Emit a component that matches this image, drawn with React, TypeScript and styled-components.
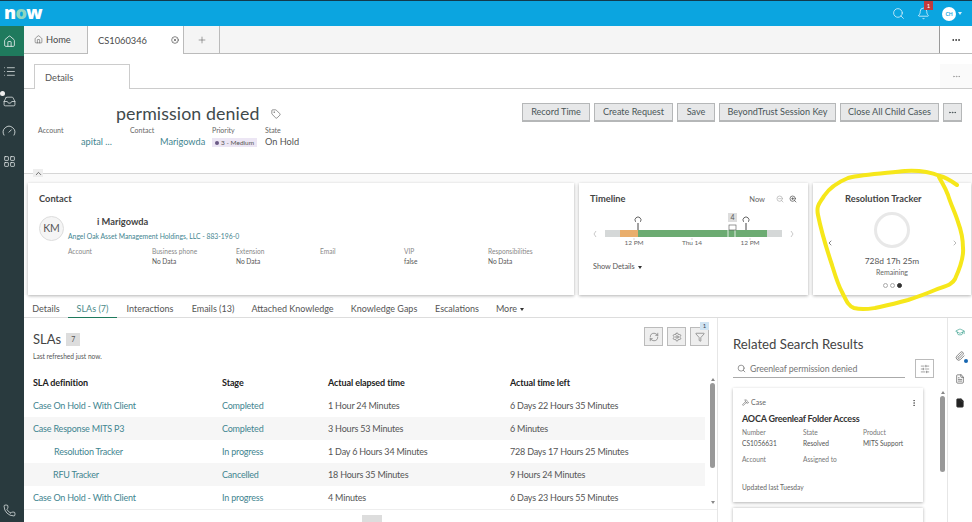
import React from "react";
import styled, { createGlobalStyle } from "styled-components";
import { Home, List, Inbox, Gauge, LayoutGrid, Phone, Search, Bell, ChevronUp, ChevronLeft, ChevronRight, Tag, RefreshCw, Settings, Filter, SlidersHorizontal, Paperclip, FileText, File, GraduationCap, ZoomIn, ZoomOut, Hammer, MoreVertical, CircleX, Plus, MoreHorizontal } from "lucide-react";

const Global = createGlobalStyle`
  html, body { margin: 0; padding: 0; width: 972px; height: 522px; overflow: hidden; background: #fff; }
  * { box-sizing: border-box; }
  body { font-family: Lato, "Noto Sans", sans-serif; color: #444; font-size: 10px; }
`;
const Page = styled.div`width: 972px; height: 522px; position: relative; overflow: hidden; display: flex; flex-direction: column;`;
const TopBar = styled.header`height: 26px; flex: none; background: #0ba5e0; border-top: 1px solid #123a4d; display: flex; align-items: center; padding: 0 10px 0 4px; color: #e8f6fc;`;
const Logo = styled.div`font: 800 18px/1 "Open Sans", sans-serif; color: #fff; letter-spacing: -0.6px; margin-top: -4px; span { color: #8fd6c0; }`;
const TopIcons = styled.div`margin-left: auto; display: flex; align-items: center; gap: 12px;`;
const BellWrap = styled.div`position: relative; display: flex;`;
const BellBadge = styled.span`position: absolute; right: -3px; top: -6px; width: 9px; height: 9px; background: #c33a3a; color: #fff; font-size: 6px; line-height: 9px; text-align: center;`;
const Avatar = styled.div`width: 14px; height: 14px; border-radius: 50%; background: #fff; color: #0ba5e0; font-size: 5px; font-weight: 700; line-height: 14px; text-align: center;`;
const AvatarWrap = styled.div`display: flex; align-items: center;`;
const Caret = styled.span`width: 0; height: 0; border: 2px solid transparent; border-top: 3px solid #d6effa; margin: 2px 0 0 2px;`;
const Body = styled.div`flex: 1; display: flex; min-height: 0;`;
const Rail = styled.nav`width: 24px; flex: none; background: #293a3e; display: flex; flex-direction: column; color: #e4eaea;`;
const RailItem = styled.div<{ $active?: boolean }>`height: 30px; display: flex; align-items: center; justify-content: center; padding-right: 6px; position: relative; background: ${p => p.$active ? "#1f7a5d" : "transparent"};`;
const RailDot = styled.span`position: absolute; left: 0; top: 5px; width: 5px; height: 5px; border-radius: 50%; background: #eee;`;
const RailSpacer = styled.div`flex: 1;`;
const RailBottom = styled.div`height: 26px; display: flex; justify-content: center; padding: 8px 6px 0 0;`;
const Main = styled.main`flex: 1; min-width: 0; display: flex; flex-direction: column;`;
const TabBar = styled.div`height: 28px; flex: none; background: #f5f5f5; border-bottom: 1px solid #bbb; display: flex; align-items: stretch;`;
const TopTab = styled.div<{ $active?: boolean; $w: number }>`width: ${p => p.$w}px; display: flex; align-items: center; gap: 3px; padding-left: 10px; font-size: 9.3px; color: #4a4a4a; background: ${p => p.$active ? "#fff" : "transparent"}; border-left: ${p => p.$active ? "1px solid #bbb" : "0"}; border-right: 1px solid ${p => p.$active ? "#bbb" : "transparent"}; margin-bottom: ${p => p.$active ? "-1px" : "0"};`;
const TabClose = styled.span`margin-left: auto; margin-right: 4px; display: flex;`;
const PlusTab = styled.div`width: 36px; display: flex; align-items: center; justify-content: center; border-right: 1px solid #bbb; color: #555;`;
const MoreTab = styled.div`margin-left: auto; width: 33px; display: flex; align-items: center; justify-content: center; background: #fff; border-left: 1px solid #999; color: #333;`;
const DetailStrip = styled.div`height: 35px; flex: none; border-bottom: 1px solid #ccc; display: flex; align-items: flex-end; padding-left: 10px;`;
const DetailTab = styled.div`width: 96px; height: 25px; border: 1px solid #ccc; border-bottom: 0; background: #fff; margin-bottom: -1px; padding: 7px 0 0 10px; font-size: 9.3px; color: #555;`;
const StripMore = styled.div`margin-left: auto; width: 32px; height: 24px; display: flex; align-items: center; justify-content: center; background: #fafafa; color: #999;`;
const Header = styled.section`height: 85px; flex: none; border-bottom: 1px solid #d6d6d6; display: flex; justify-content: space-between; padding: 0 10px 0 14px; position: relative;`;
const HeadLeft = styled.div`display: flex; flex-direction: column;`;
const TitleRow = styled.div`display: flex; align-items: center; padding-left: 78px; margin-top: 13px; height: 23px;`;
const Title = styled.h1`font: 400 17.8px/23px Lato, sans-serif; color: #3f4a4c; margin: 0; letter-spacing: 0.1px;`;
const TitleTag = styled.span`display: flex; margin-left: 11px; color: #555;`;
const Meta = styled.div`display: grid; grid-template-columns: 92px 82px 53px auto;`;
const MetaCol = styled.div`display: flex; flex-direction: column;`;
const MetaLabel = styled.span`font-size: 7px; color: #666; line-height: 10px;`;
const MetaValue = styled.span<{ $link?: boolean; $pad?: number }>`font-size: 9.2px; line-height: 14px; color: ${p => p.$link ? "#3f8590" : "#555"}; padding-left: ${p => p.$pad ?? 0}px; white-space: nowrap;`;
const Pill = styled.span`align-self: flex-start; display: inline-flex; align-items: center; gap: 2px; height: 9px; padding: 0 3px; background: #ece6f4; font-size: 6.5px; color: #555; margin-top: 3px;`;
const PillDot = styled.span`width: 4px; height: 4px; border-radius: 50%; background: #6b5a85;`;
const Buttons = styled.div`display: flex; gap: 4px; margin-top: 14px; align-items: flex-start;`;
const Btn = styled.button<{ $w: number }>`width: ${p => p.$w}px; height: 19px; padding: 0; background: #e7e8e9; border: 1px solid #b5b7b8; border-bottom-width: 2px; font: 400 9.1px/1 Lato, sans-serif; color: #4a5558; display: flex; align-items: center; justify-content: center;`;
const Chevron = styled.span`position: absolute; left: 9px; bottom: -4px; width: 10px; height: 8px; background: #eee; display: flex; align-items: center; justify-content: center; color: #444;`;
const Cards = styled.section`height: 121px; flex: none; background: #fafafa; display: grid; grid-template-columns: 546px 229px 158px; gap: 5px; padding: 9px 0 0 4px;`;
const Card = styled.div`height: 112px; background: #fff; box-shadow: 0 1px 3px rgba(0,0,0,.3); padding: 10px 11px; position: relative;`;
const CardTitle = styled.h2`font: 700 9.3px/12px Lato, sans-serif; color: #444; margin: 0;`;
const ContactRow = styled.div`display: flex; gap: 4px; margin-top: 11px;`;
const Initials = styled.div`width: 25px; height: 25px; border-radius: 50%; background: #f5f5f5; border: 1px solid #ddd; font-size: 10.5px; line-height: 23px; text-align: center; color: #555; flex: none;`;
const ContactInfo = styled.div`display: flex; flex-direction: column;`;
const ContactName = styled.div`font-weight: 700; font-size: 9.3px; line-height: 12px; color: #444; padding-left: 29px;`;
const ContactOrg = styled.a`font-size: 6.8px; line-height: 12px; margin-top: 2px; color: #3f8590;`;
const Facts = styled.div`display: grid; grid-template-columns: repeat(6, 84px); margin: 5px 0 0 29px;`;
const Fact = styled.div`display: flex; flex-direction: column; gap: 1px; font-size: 6.6px; line-height: 9px; color: #888; span { color: #555; }`;
const TimelineHead = styled.div`display: flex; align-items: center;`;
const NowTag = styled.span`margin-left: auto; font-size: 7.5px; color: #666;`;
const Zooms = styled.span`display: flex; gap: 5px; margin-left: 11px; color: #aaa; svg:last-child { color: #444; }`;
const Track = styled.svg`display: block; margin: 2px 0 0 -2px;`;
const ShowDetails = styled.div`display: flex; align-items: center; gap: 3px; font-size: 7.3px; color: #555; margin-top: 5px; padding-left: 3px;`;
const SmallCaret = styled.span`width: 0; height: 0; border: 2.5px solid transparent; border-top: 3px solid #333; margin-top: 3px;`;
const TrackerTitle = styled(CardTitle)`padding-left: 21px;`;
const Ring = styled.div`width: 36px; height: 36px; border: 3px solid #e8e8e8; border-radius: 50%; margin: 7px auto 0;`;
const TrackerArrow = styled.span<{ $right?: boolean }>`position: absolute; top: 56px; ${p => p.$right ? "right: 12px;" : "left: 13px;"} display: flex; color: ${p => p.$right ? "#999" : "#444"};`;
const TrackerValue = styled.div`text-align: center; font-size: 8.4px; line-height: 12px; color: #555; margin-top: 7px;`;
const TrackerSub = styled.div`text-align: center; font-size: 7px; line-height: 10px; color: #666;`;
const Dots = styled.div`display: flex; justify-content: center; gap: 2px; margin-top: 6px;`;
const Dot = styled.span<{ $on?: boolean }>`width: 5px; height: 5px; border-radius: 50%; border: 1px solid ${p => p.$on ? "#333" : "#aaa"}; background: ${p => p.$on ? "#333" : "#fff"};`;
const TabsRow = styled.div`height: 23px; flex: none; border-bottom: 1px solid #ddd; display: flex; align-items: stretch;`;
const SubTab = styled.div<{ $active?: boolean; $w: number }>`width: ${p => p.$w}px; display: flex; align-items: center; justify-content: center; gap: 3px; padding-top: 4px; font-size: 9px; color: ${p => p.$active ? "#4a8a88" : "#555"}; border-bottom: ${p => p.$active ? "1px solid #1f7a5d" : "0"}; margin-bottom: -1px;`;
const Lower = styled.section`flex: 1; min-height: 0; display: flex;`;
const SlaPanel = styled.div`width: 694px; flex: none; border-right: 1px solid #e6e6e6; display: flex; flex-direction: column; position: relative; overflow: hidden;`;
const SlaHead = styled.div`height: 52px; flex: none; display: flex; padding: 12px 9px 0 9px;`;
const SlaTitleBox = styled.div`display: flex; flex-direction: column;`;
const SlaTitleLine = styled.div`display: flex; align-items: center; gap: 5px;`;
const SlaTitle = styled.h2`font: 400 13px/18px Lato, sans-serif; color: #444; margin: 0;`;
const CountBadge = styled.span`width: 14px; height: 13px; background: #ddd; font-size: 7px; line-height: 13px; text-align: center; color: #555;`;
const Refreshed = styled.div`font-size: 6.6px; line-height: 9px; color: #555; margin-top: 4px;`;
const Tools = styled.div`margin-left: auto; margin-top: -3px; display: flex; gap: 4px; margin-right: -1px; height: 19px;`;
const ToolBtn = styled.div`width: 19px; height: 19px; background: #eee; border: 1px solid #bbb; display: flex; align-items: center; justify-content: center; position: relative; color: #555;`;
const ToolBadge = styled.span`position: absolute; right: -1px; top: -6px; width: 9px; height: 8px; background: #cfe3f2; font-size: 6px; line-height: 8px; text-align: center; color: #345;`;
const Row = styled.div<{ $stripe?: boolean; $head?: boolean }>`height: ${p => p.$head ? 24 : 23}px; flex: none; display: grid; grid-template-columns: 189px 106px 182px auto; align-items: center; padding-left: 9px; width: 681px; background: ${p => p.$stripe ? "#f6f6f6" : "#fff"}; font-size: 9px; letter-spacing: ${p => p.$head ? "-0.1px" : "-0.2px"}; color: ${p => p.$head ? "#222" : "#555"}; font-weight: ${p => p.$head ? 700 : 400};`;
const LinkCell = styled.span<{ $pad?: number }>`color: #3f8590; padding-left: ${p => p.$pad ?? 0}px;`;
const ScrollTrack = styled.div`position: absolute; right: 1px; top: 58px; width: 7px; height: 130px; display: flex; flex-direction: column; align-items: center;`;
const Arrow = styled.span<{ $down?: boolean }>`width: 0; height: 0; border: 2.5px solid transparent; ${p => p.$down ? "border-top: 3px solid #888;" : "border-bottom: 3px solid #888;"}`;
const Thumb = styled.div`width: 5px; height: 85px; background: #999; border-radius: 3px; margin: 2px 0 auto;`;
const CutRow = styled.div`height: 10px; flex: none; border-top: 1px solid #eee; position: relative;`;
const HScroll = styled.span`position: absolute; left: 338px; top: 5px; width: 20px; height: 8px; background: #ddd;`;
const RelPanel = styled.div`width: 229px; flex: none; padding: 17px 0 0 15px; position: relative; overflow: hidden;`;
const RelTitle = styled.h2`font: 400 13.2px/18px Lato, sans-serif; color: #444; margin: 0;`;
const SearchRow = styled.div`display: flex; align-items: flex-start; gap: 10px; margin-top: 6px;`;
const SearchBox = styled.div`width: 172px; height: 19px; border-bottom: 1px solid #aaa; display: flex; align-items: center; gap: 4px; padding-left: 4px; font-size: 8.8px; letter-spacing: -0.1px; color: #777;`;
const FilterBtn = styled.div`width: 19px; height: 19px; border: 1px solid #bbb; display: flex; align-items: center; justify-content: center; color: #555;`;
const ResultCard = styled.article`width: 190px; height: 114px; background: #fff; box-shadow: 0 1px 3px rgba(0,0,0,.3); margin-top: 10px; padding: 10px 9px; position: relative;`;
const ResultKind = styled.div`display: flex; align-items: center; gap: 2px; font-size: 7px; color: #666;`;
const ResultMenu = styled.span`position: absolute; right: 5px; top: 11px; display: flex; color: #444;`;
const ResultName = styled.div`font-weight: 700; font-size: 9px; letter-spacing: -0.2px; line-height: 12px; color: #333; margin-top: 7px;`;
const ResultGrid = styled.div`display: grid; grid-template-columns: 61px 60px auto; row-gap: 7px; margin-top: 3px;`;
const ResultFact = styled.div`display: flex; flex-direction: column; gap: 2px; font-size: 6.6px; line-height: 9px; color: #777; span { color: #555; min-height: 9px; }`;
const Updated = styled.div`font-size: 6.6px; color: #666; margin-top: 8px;`;
const NextCard = styled.div`width: 190px; height: 30px; background: #fff; box-shadow: 0 0 3px rgba(0,0,0,.3); margin-top: 6px;`;
const RelScroll = styled.div`position: absolute; right: 1px; top: 71px; width: 7px; height: 90px; display: flex; flex-direction: column; align-items: center;`;
const RelThumb = styled(Thumb)`height: 76px;`;
const SideRail = styled.aside`flex: 1; border-left: 1px solid #e6e6e6; display: flex; flex-direction: column; align-items: center; gap: 13.5px; padding-top: 9px; color: #444;`;
const ClipWrap = styled.span`position: relative; display: flex;`;
const ClipDot = styled.span`position: absolute; right: -3px; bottom: -2px; width: 4px; height: 4px; border-radius: 50%; background: #1666b0;`;
const Scribble = styled.svg`position: absolute; left: 0; top: 0; pointer-events: none;`;

const rows: { def: string; pad?: number; stage: string; elapsed: string; left: string }[] = [
  { def: "Case On Hold - With Client", stage: "Completed", elapsed: "1 Hour 24 Minutes", left: "6 Days 22 Hours 35 Minutes" },
  { def: "Case Response MITS P3", stage: "Completed", elapsed: "3 Hours 53 Minutes", left: "6 Minutes" },
  { def: "Resolution Tracker", pad: 21, stage: "In progress", elapsed: "1 Day 6 Hours 34 Minutes", left: "728 Days 17 Hours 25 Minutes" },
  { def: "RFU Tracker", pad: 20, stage: "Cancelled", elapsed: "18 Hours 35 Minutes", left: "9 Hours 24 Minutes" },
  { def: "Case On Hold - With Client", stage: "In progress", elapsed: "4 Minutes", left: "6 Days 23 Hours 55 Minutes" },
];
const subTabs: [string, number, boolean?][] = [["Details", 44], ["SLAs (7)", 49, true], ["Interactions", 66], ["Emails (13)", 60], ["Attached Knowledge", 99], ["Knowledge Gaps", 84], ["Escalations", 62]];
const facts = [["Account", ""], ["Business phone", "No Data"], ["Extension", "No Data"], ["Email", ""], ["VIP", "false"], ["Responsibilities", "No Data"]];

export default function App() {
  return (
    <Page>
      <Global />
      <TopBar>
        <Logo>n<span>o</span>w</Logo>
        <TopIcons>
          <Search size={13} strokeWidth={1.4} />
          <BellWrap><Bell size={13} strokeWidth={1.4} /><BellBadge>1</BellBadge></BellWrap>
          <AvatarWrap><Avatar>CH</Avatar><Caret /></AvatarWrap>
        </TopIcons>
      </TopBar>
      <Body>
        <Rail>
          <RailItem $active><Home size={13} strokeWidth={1.6} /></RailItem>
          <RailItem><List size={13} strokeWidth={1.4} /></RailItem>
          <RailItem><RailDot /><Inbox size={13} strokeWidth={1.4} /></RailItem>
          <RailItem><Gauge size={14} strokeWidth={1.4} /></RailItem>
          <RailItem><LayoutGrid size={13} strokeWidth={1.4} /></RailItem>
          <RailSpacer />
          <RailBottom><Phone size={13} strokeWidth={1.4} /></RailBottom>
        </Rail>
        <Main>
          <TabBar>
            <TopTab $w={63}><Home size={9} strokeWidth={1.4} />Home</TopTab>
            <TopTab $active $w={97}>CS1060346<TabClose><CircleX size={8} /></TabClose></TopTab>
            <PlusTab><Plus size={10} strokeWidth={1.3} /></PlusTab>
            <MoreTab><MoreHorizontal size={10} strokeWidth={2.4} /></MoreTab>
          </TabBar>
          <DetailStrip>
            <DetailTab>Details</DetailTab>
            <StripMore><MoreHorizontal size={9} /></StripMore>
          </DetailStrip>
          <Header>
            <HeadLeft>
              <TitleRow>
                <Title>permission denied</Title>
                <TitleTag><Tag size={10} strokeWidth={1.5} /></TitleTag>
              </TitleRow>
              <Meta>
                <MetaCol><MetaLabel>Account</MetaLabel><MetaValue $link $pad={43}>apital ...</MetaValue></MetaCol>
                <MetaCol><MetaLabel>Contact</MetaLabel><MetaValue $link $pad={30}>Marigowda</MetaValue></MetaCol>
                <MetaCol><MetaLabel>Priority</MetaLabel><Pill><PillDot />3 - Medium</Pill></MetaCol>
                <MetaCol><MetaLabel>State</MetaLabel><MetaValue>On Hold</MetaValue></MetaCol>
              </Meta>
            </HeadLeft>
            <Buttons>
              <Btn $w={68}>Record Time</Btn>
              <Btn $w={79}>Create Request</Btn>
              <Btn $w={38}>Save</Btn>
              <Btn $w={117}>BeyondTrust Session Key</Btn>
              <Btn $w={99}>Close All Child Cases</Btn>
              <Btn $w={19}><MoreHorizontal size={9} strokeWidth={2.4} /></Btn>
            </Buttons>
            <Chevron><ChevronUp size={9} /></Chevron>
          </Header>
          <Cards>
            <Card>
              <CardTitle>Contact</CardTitle>
              <ContactRow>
                <Initials>KM</Initials>
                <ContactInfo>
                  <ContactName>i Marigowda</ContactName>
                  <ContactOrg>Angel Oak Asset Management Holdings, LLC - 883-196-0</ContactOrg>
                </ContactInfo>
              </ContactRow>
              <Facts>
                {facts.map(([l, v]) => <Fact key={l}>{l}<span>{v}</span></Fact>)}
              </Facts>
            </Card>
            <Card>
              <TimelineHead>
                <CardTitle>Timeline</CardTitle>
                <NowTag>Now</NowTag>
                <Zooms><ZoomOut size={8} /><ZoomIn size={8} /></Zooms>
              </TimelineHead>
              <Track width="216" height="50" viewBox="0 0 216 50">
                <path d="M8 24l-2 3 2 3M203 24l2 3-2 3" fill="none" stroke="#bbb" strokeWidth="0.8" />
                <rect x="17" y="23" width="15" height="7" fill="#d5d8d8" />
                <rect x="32" y="23" width="18" height="7" fill="#e9ae6c" />
                <rect x="50" y="23" width="129" height="7" fill="#6cab72" />
                <rect x="179" y="23" width="15" height="7" fill="#d5d8d8" />
                <path d="M140 23v7M147 23v7" stroke="#fff" strokeWidth="0.8" />
                <rect x="141" y="18" width="7" height="5" fill="none" stroke="#555" strokeWidth="0.6" />
                <rect x="140" y="6" width="9" height="9" fill="#ddd" />
                <text x="144.5" y="13" fontSize="7" textAnchor="middle" fill="#555" fontFamily="Lato">4</text>
                <path d="M47.6 14.8a3 3 0 1 1 4.8 0" fill="none" stroke="#555" strokeWidth="0.9" />
                <path d="M50 16v7" stroke="#444" strokeWidth="1" />
                <path d="M155.6 14.8a3 3 0 1 1 4.8 0" fill="none" stroke="#555" strokeWidth="0.9" />
                <path d="M158 16v7" stroke="#444" strokeWidth="1" />
                <path d="M46 31v2M104 31v2M162 31v2" stroke="#aaa" strokeWidth="0.5" />
                <g fontSize="6.5" fill="#666" fontFamily="Lato" textAnchor="middle">
                  <text x="46" y="38">12 PM</text>
                  <text x="104" y="38">Thu 14</text>
                  <text x="162" y="38">12 PM</text>
                </g>
              </Track>
              <ShowDetails>Show Details <SmallCaret /></ShowDetails>
            </Card>
            <Card>
              <TrackerTitle>Resolution Tracker</TrackerTitle>
              <TrackerArrow><ChevronLeft size={8} /></TrackerArrow>
              <TrackerArrow $right><ChevronRight size={8} /></TrackerArrow>
              <Ring />
              <TrackerValue>728d 17h 25m</TrackerValue>
              <TrackerSub>Remaining</TrackerSub>
              <Dots><Dot /><Dot /><Dot $on /></Dots>
            </Card>
          </Cards>
          <TabsRow>
            {subTabs.map(([t, w, a]) => <SubTab key={t} $w={w} $active={a}>{t}</SubTab>)}
            <SubTab $w={44}>More <SmallCaret /></SubTab>
          </TabsRow>
          <Lower>
            <SlaPanel>
              <SlaHead>
                <SlaTitleBox>
                  <SlaTitleLine><SlaTitle>SLAs</SlaTitle><CountBadge>7</CountBadge></SlaTitleLine>
                  <Refreshed>Last refreshed just now.</Refreshed>
                </SlaTitleBox>
                <Tools>
                  <ToolBtn><RefreshCw size={10} strokeWidth={1.3} /></ToolBtn>
                  <ToolBtn><Settings size={10} strokeWidth={1.3} /></ToolBtn>
                  <ToolBtn><ToolBadge>1</ToolBadge><Filter size={10} strokeWidth={1.3} /></ToolBtn>
                </Tools>
              </SlaHead>
              <Row $head><span>SLA definition</span><span>Stage</span><span>Actual elapsed time</span><span>Actual time left</span></Row>
              {rows.map((r, i) => (
                <Row key={i} $stripe={i % 2 === 1}>
                  <LinkCell $pad={r.pad}>{r.def}</LinkCell><LinkCell>{r.stage}</LinkCell><span>{r.elapsed}</span><span>{r.left}</span>
                </Row>
              ))}
              <CutRow><HScroll /></CutRow>
              <ScrollTrack><Arrow /><Thumb /><Arrow $down /></ScrollTrack>
            </SlaPanel>
            <RelPanel>
              <RelTitle>Related Search Results</RelTitle>
              <SearchRow>
                <SearchBox><Search size={9} />Greenleaf permission denied</SearchBox>
                <FilterBtn><SlidersHorizontal size={10} strokeWidth={1.3} /></FilterBtn>
              </SearchRow>
              <ResultCard>
                <ResultKind><Hammer size={7} />Case</ResultKind>
                <ResultMenu><MoreVertical size={8} /></ResultMenu>
                <ResultName>AOCA Greenleaf Folder Access</ResultName>
                <ResultGrid>
                  <ResultFact>Number<span>CS1056631</span></ResultFact>
                  <ResultFact>State<span>Resolved</span></ResultFact>
                  <ResultFact>Product<span>MITS Support</span></ResultFact>
                  <ResultFact>Account<span /></ResultFact>
                  <ResultFact>Assigned to<span /></ResultFact>
                </ResultGrid>
                <Updated>Updated last Tuesday</Updated>
              </ResultCard>
              <NextCard />
              <RelScroll><Arrow /><RelThumb /></RelScroll>
            </RelPanel>
            <SideRail>
              <GraduationCap size={10} color="#2e9a86" strokeWidth={1.5} />
              <ClipWrap><Paperclip size={10} strokeWidth={1.5} /><ClipDot /></ClipWrap>
              <FileText size={10} strokeWidth={1.5} />
              <File size={10} strokeWidth={1.5} fill="#222" />
            </SideRail>
          </Lower>
        </Main>
      </Body>
      <Scribble width="972" height="522" viewBox="0 0 972 522">
        <path d="M957 185C950 180 945 177 940 176C930 172 920 170 905 171C890 173 865 174 848 178C836 183 828 190 824 196C820 203 816 205 818 215C822 235 827 250 832 265C836 278 838 285 842 292C846 300 848 306 854 308C862 310 868 309 875 308C890 305 900 302 908 300C920 296 928 293 935 290C945 286 952 285 955 279C960 268 964 258 963 248C963 238 961 230 958 222C955 212 951 205 948 195C945 187 942 183 939 177" fill="none" stroke="#f6e71a" strokeWidth="4" strokeLinecap="round" strokeLinejoin="round" />
      </Scribble>
    </Page>
  );
}
